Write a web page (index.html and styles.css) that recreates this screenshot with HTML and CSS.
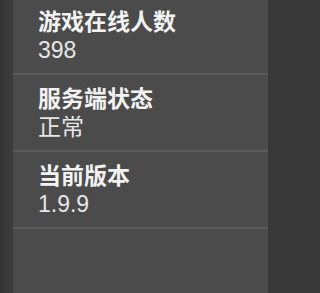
FILE: index.html
```html
<!DOCTYPE html>
<html lang="zh-CN">
<head>
<meta charset="utf-8">
<link rel="stylesheet" href="styles.css">
</head>
<body>
<div class="frame">
  <div class="edge-left"></div>
  <div class="panel">
    <div class="list">
      <div class="item">
        <div class="title">游戏在线人数</div>
        <div class="value">398</div>
      </div>
      <div class="item">
        <div class="title">服务端状态</div>
        <div class="value">正常</div>
      </div>
      <div class="item">
        <div class="title">当前版本</div>
        <div class="value">1.9.9</div>
      </div>
    </div>
  </div>
  <div class="edge-right"></div>
</div>
</body>
</html>
```

FILE: styles.css
```css
html, body {
  margin: 0;
  padding: 0;
  background: #383838;
}
.frame {
  display: flex;
  width: 275px;
  height: 293px;
  overflow: hidden;
}
.edge-left {
  width: 13px;
  flex: none;
  background: linear-gradient(to right, #333333, #3d3d3d);
}
.panel {
  flex: 1;
  background: #4b4b4b;
}
.edge-right {
  width: 7px;
  flex: none;
  background: #383838;
}
.list {
  margin-top: -2px;
}
.item {
  box-sizing: content-box;
  padding: 11px 0 0 25px;
  height: 64px;
  border-bottom: 2px solid #5b5b5b;
  font-family: "Liberation Sans", "Noto Sans CJK SC", sans-serif;
  color: #f2f2f2;
}
.title {
  font-size: 23px;
  line-height: 27px;
  font-weight: bold;
}
.value {
  margin-top: 1px;
  font-size: 23px;
  line-height: 27px;
  color: #e6e6e6;
}
```
